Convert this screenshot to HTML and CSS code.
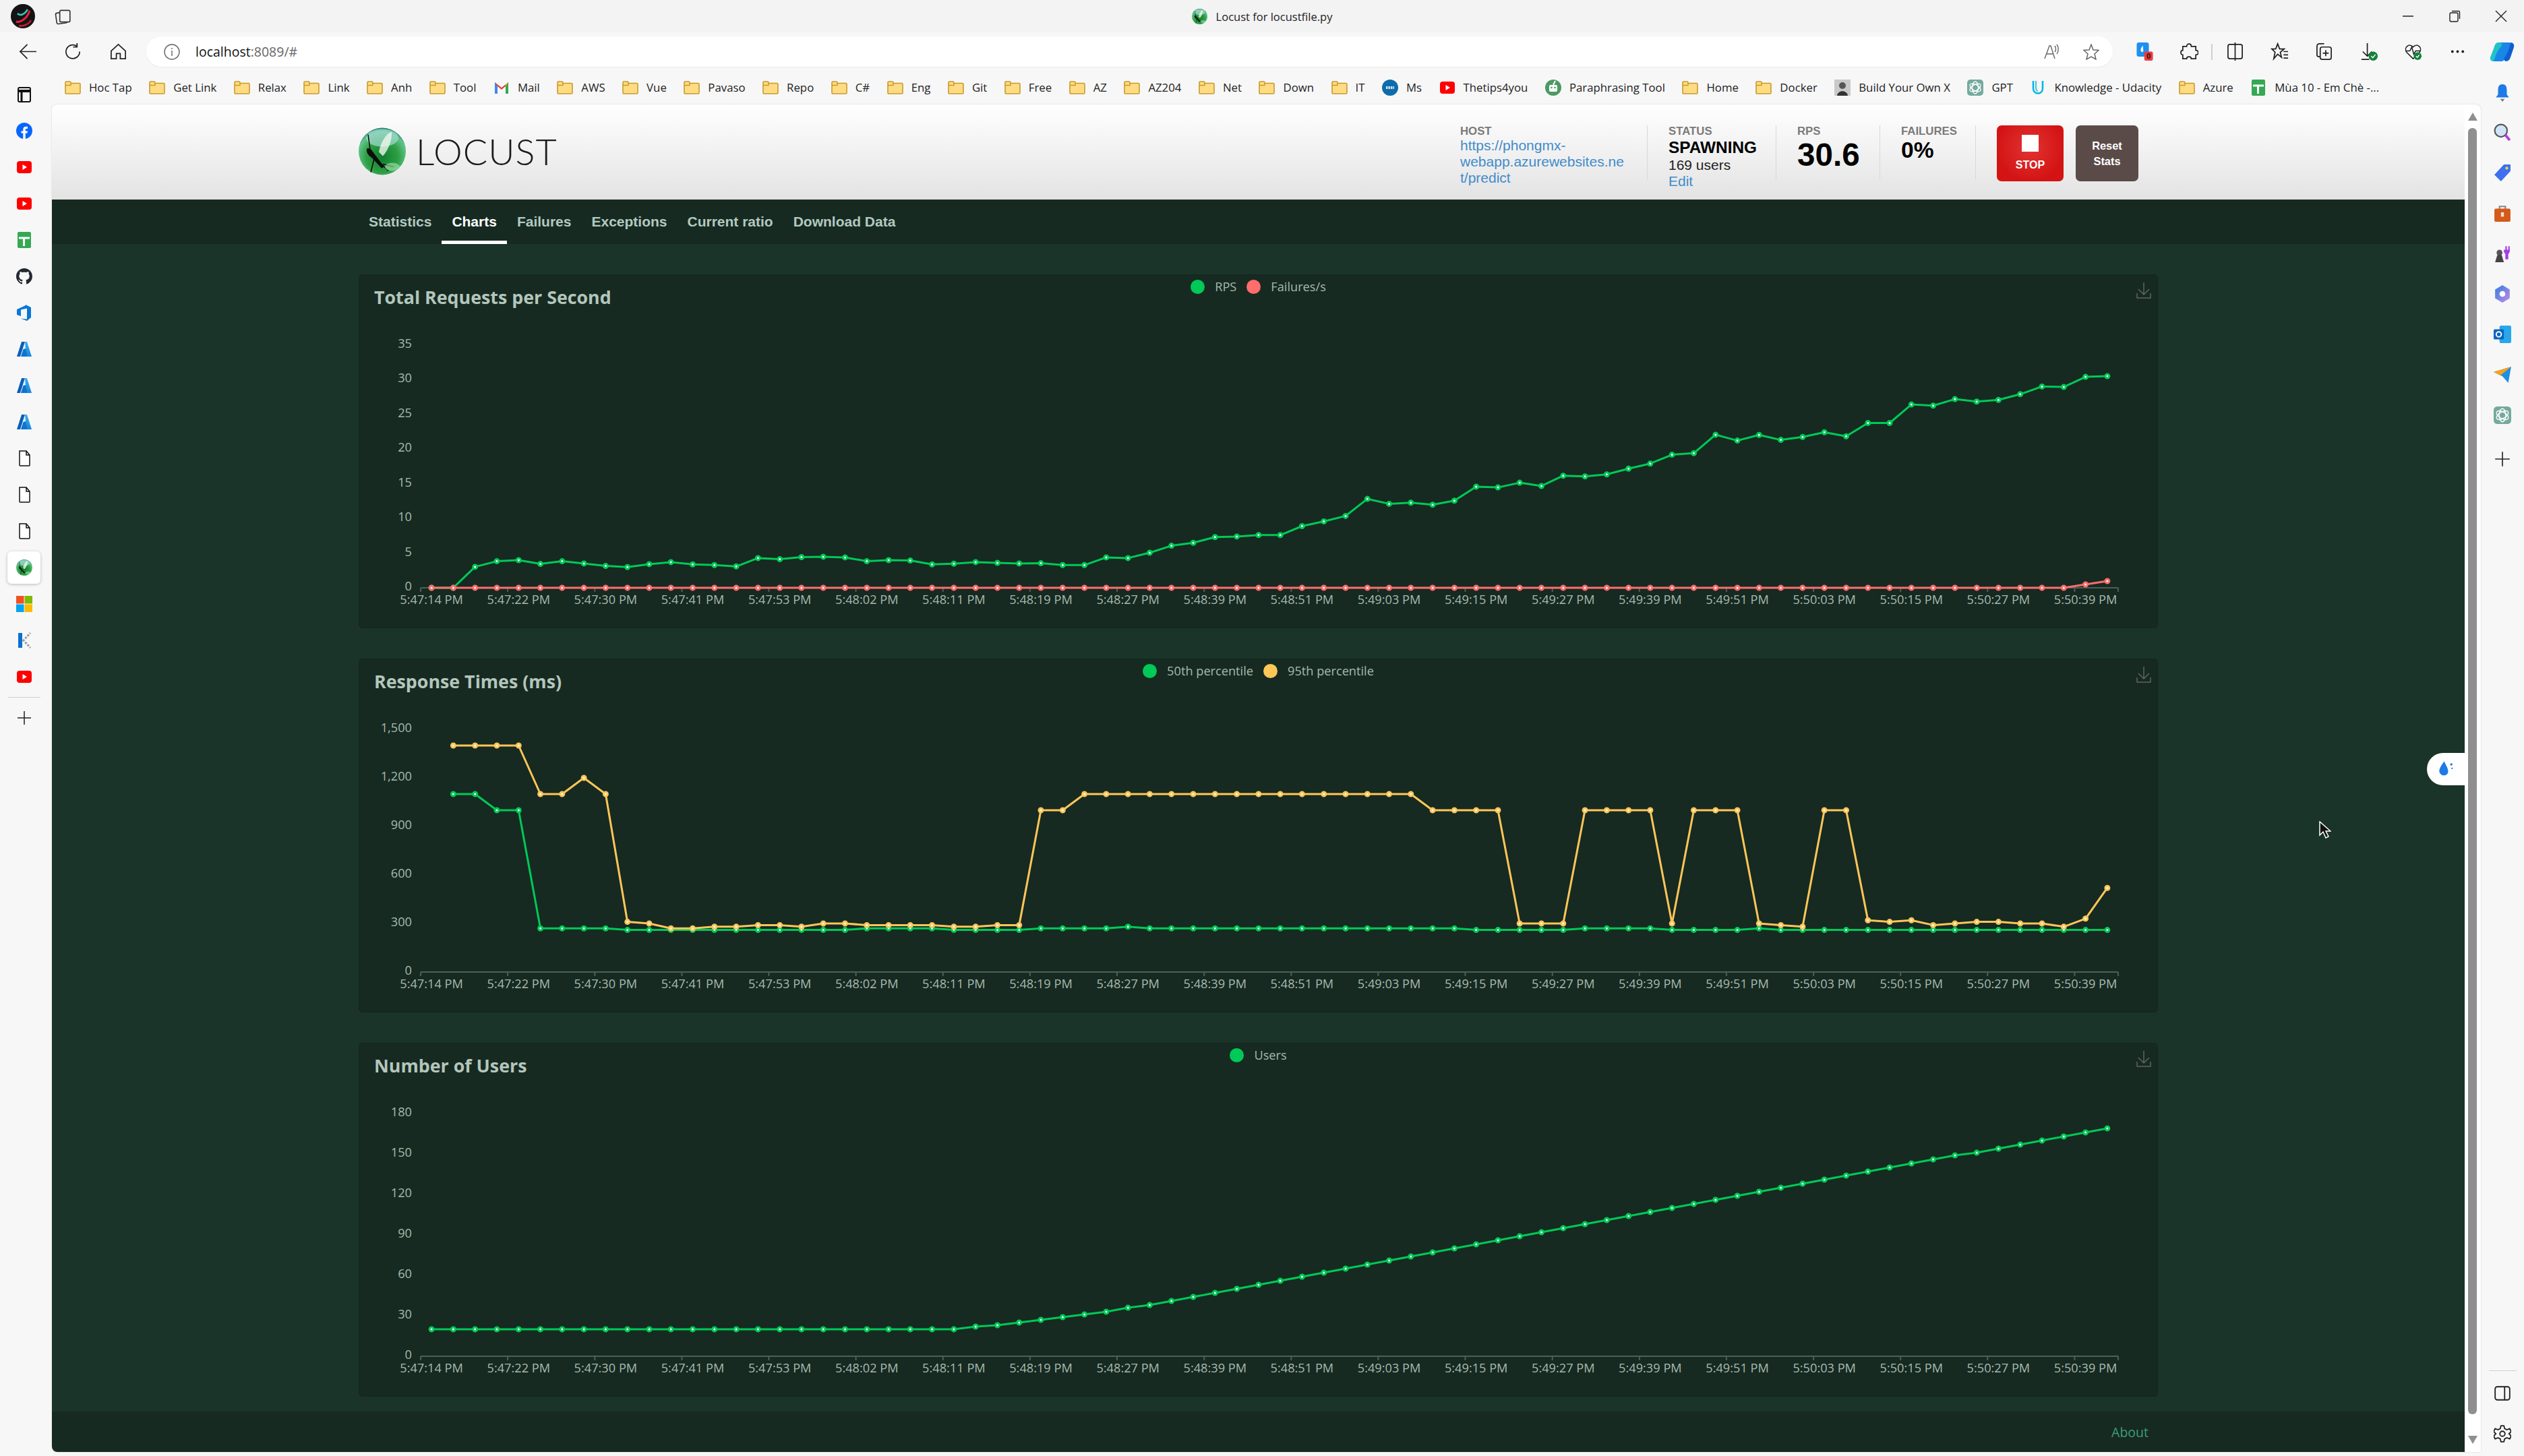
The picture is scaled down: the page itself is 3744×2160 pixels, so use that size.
FILE: index.html
```html
<!DOCTYPE html>
<html lang="en">
<head>
    <meta charset="UTF-8">
    <meta name="viewport" content="width=device-width, initial-scale=1.0">
    <title>Locust for locustfile.py</title>
    <link rel="stylesheet" href="styles.css">
</head>
<body>
    <!-- Shared icons -->
    <svg class="icon-defs" width="0" height="0">
        <defs>
            <radialGradient id="ball" cx="50%" cy="62%" r="62%">
                <stop offset="0" stop-color="#0f7d2e"/>
                <stop offset="0.55" stop-color="#2f9f45"/>
                <stop offset="0.85" stop-color="#62c48c"/>
                <stop offset="1" stop-color="#1f7d6a"/>
            </radialGradient>
            <linearGradient id="azure-a" x1="0" y1="0" x2="0" y2="1">
                <stop offset="0" stop-color="#35b0f0"/>
                <stop offset="1" stop-color="#1c84dc"/>
            </linearGradient>
            <linearGradient id="m365" x1="0" y1="0" x2="1" y2="1">
                <stop offset="0" stop-color="#2f7fe0"/>
                <stop offset="1" stop-color="#c58be8"/>
            </linearGradient>
        </defs>
        <symbol id="i-locust" viewBox="0 0 70 70">
            <circle cx="35" cy="35" r="35" fill="url(#ball)"/>
            <ellipse cx="35" cy="15" rx="24" ry="13" fill="#9ed8cc" opacity="0.75"/>
            <path d="M30 36C33 20 42 8 49 6C50 16 45 32 36 42Z" fill="#eef8ee" opacity="0.8"/>
            <path d="M12 31C16 29 20 33 22 37L38 58L34 60L19 44C14 41 11 36 12 31Z" fill="#0c0f0c"/>
            <path d="M14 10L17 32M24 42L18 66M32 52L44 64M36 54L52 58" stroke="#0c0f0c" stroke-width="1.6" fill="none"/>
            <ellipse cx="50" cy="58" rx="11" ry="6" fill="#a6e6b0" opacity="0.6"/>
        </symbol>
        <symbol id="i-folder" viewBox="0 0 24 20">
            <path d="M1 4V2.5C1 1.6 1.6 1 2.5 1H7.5C8.4 1 9 1.6 9 2.5V3.5H21.5C22.4 3.5 23 4.1 23 5V17.5C23 18.4 22.4 19 21.5 19H2.5C1.6 19 1 18.4 1 17.5Z" fill="#ffdc83" stroke="#c89b2c" stroke-width="1.6"/>
            <path d="M1 6.5H9V3.5" fill="none" stroke="#c89b2c" stroke-width="1.4"/>
        </symbol>
        <symbol id="i-youtube" viewBox="0 0 24 24">
            <rect x="1" y="3" width="22" height="18" rx="4" fill="#ff0000"/>
            <path d="M9.5 8L16 12L9.5 16Z" fill="#fff"/>
        </symbol>
        <symbol id="i-sheet" viewBox="0 0 24 24">
            <rect x="2" y="0" width="20" height="24" rx="2" fill="#34a853"/>
            <path d="M4 9H20M11.5 9V21" stroke="#fff" stroke-width="3"/>
        </symbol>
        <symbol id="i-azure" viewBox="0 0 24 24">
            <path d="M8 1H13L6 23H1Z" fill="#0a5fb8"/>
            <path d="M13 1H16L23 23H15Z" fill="url(#azure-a)"/>
            <path d="M10.5 12L14 11L16.5 23H7Z" fill="#0d74cf"/>
        </symbol>
        <symbol id="i-file" viewBox="0 0 24 24">
            <path d="M5 1H15L20 7V22C20 22.6 19.6 23 19 23H6C5.4 23 5 22.6 5 22ZM15 1V7H20" fill="#fff" stroke="#111" stroke-width="1.5"/>
        </symbol>
        <symbol id="i-gpt" viewBox="0 0 24 24">
            <rect width="24" height="24" rx="5" fill="#74aa9c"/>
            <g fill="none" stroke="#fff" stroke-width="1.3">
                <ellipse cx="12" cy="12" rx="4.5" ry="9"/>
                <ellipse cx="12" cy="12" rx="4.5" ry="9" transform="rotate(60 12 12)"/>
                <ellipse cx="12" cy="12" rx="4.5" ry="9" transform="rotate(120 12 12)"/>
            </g>
        </symbol>
        <symbol id="i-plus" viewBox="0 0 24 24">
            <path d="M12 2V22M2 12H22" stroke="#222" stroke-width="1.5"/>
        </symbol>
        <symbol id="i-download" viewBox="0 0 22 24">
            <path d="M11 0V17M3 10L11 18L19 10M1 16V23H21V16" fill="none" stroke="#5c6660" stroke-width="1.5"/>
        </symbol>
    </svg>

    <div class="browser">
        <header class="titlebar">
            <div class="titlebar-left">
                <svg class="avatar" viewBox="0 0 36 36">
                    <circle cx="18" cy="18" r="18" fill="#141417"/>
                    <path d="M8 26C14 28 24 22 28 10" stroke="#e5213a" stroke-width="3" fill="none"/>
                    <path d="M10 14C14 18 20 16 25 8" stroke="#35c7b4" stroke-width="2.5" fill="none"/>
                    <path d="M12 32C18 33 26 31 30 24" stroke="#c81e2c" stroke-width="2.5" fill="none"/>
                </svg>
                <svg class="tab-icon" viewBox="0 0 24 24" fill="none" stroke="#333" stroke-width="1.5">
                    <rect x="3" y="7" width="14" height="15" rx="2" transform="rotate(-8 10 14)"/>
                    <rect x="8" y="4" width="14" height="16" rx="2" fill="#f3f3f3"/>
                </svg>
            </div>
            <div class="tab-title">
                <svg class="favicon"><use href="#i-locust"/></svg>
                <span>Locust for locustfile.py</span>
            </div>
            <div class="window-controls">
                <span class="win-btn"><svg viewBox="0 0 18 18"><path d="M1 9H17" stroke="#222" stroke-width="1.5"/></svg></span>
                <span class="win-btn"><svg viewBox="0 0 18 18" fill="none" stroke="#222" stroke-width="1.4"><rect x="2" y="4" width="12" height="13" rx="2"/><path d="M5 1.5H15C16 1.5 16.5 2 16.5 3V13"/></svg></span>
                <span class="win-btn"><svg viewBox="0 0 18 18"><path d="M1 1L17 17M17 1L1 17" stroke="#222" stroke-width="1.4"/></svg></span>
            </div>
        </header>

        <div class="toolbar">
            <button class="tool-btn"><svg viewBox="0 0 28 28" fill="none" stroke="#222" stroke-width="1.8"><path d="M27 14H2M13 3L2 14L13 25"/></svg></button>
            <button class="tool-btn"><svg viewBox="0 0 28 28" fill="none" stroke="#222" stroke-width="1.8"><path d="M24 14A10.5 10.5 0 1 1 20 6M20 1V7H14"/></svg></button>
            <button class="tool-btn"><svg viewBox="0 0 28 28" fill="none" stroke="#222" stroke-width="1.8"><path d="M3 13L14 3L25 13V25H17V17H11V25H3Z"/></svg></button>
            <div class="address">
                <svg class="address-info" viewBox="0 0 24 24" fill="none" stroke="#666" stroke-width="1.4"><circle cx="12" cy="12" r="11"/><path d="M12 10V18M12 6V8"/></svg>
                <span class="address-url">localhost<span class="address-port">:8089/#</span></span>
                <svg class="address-icon" viewBox="0 0 24 24" fill="none" stroke="#666" stroke-width="1.4"><path d="M2 22L9 3H11L17 22M5 15H14M17 3C19 6 19 10 17 12M20 1C23 5 23 11 20 15"/></svg>
                <svg class="address-icon" viewBox="0 0 24 24" fill="none" stroke="#666" stroke-width="1.5"><path d="M12 1L15 9L23 9.5L17 15L19 23L12 19L5 23L7 15L1 9.5L9 9Z"/></svg>
            </div>
            <button class="tool-btn wide">
                <svg viewBox="0 0 32 36"><rect x="0" y="0" width="24" height="28" rx="4" fill="#1e90f0"/><path d="M12 6C8 12 7 15 9 18C11 20 14 18 13 15Z" fill="#fff"/><rect x="15" y="18" width="17" height="18" rx="3" fill="#ef3b3b"/><text class="badge-text" x="23.5" y="32">0</text></svg>
            </button>
            <button class="tool-btn wide"><svg viewBox="0 0 28 28" fill="none" stroke="#222" stroke-width="1.8"><path d="M10 6C10 1 17 1 17 6H24V12C29 12 29 19 24 19V25H17C17 21 10 21 10 25H4V19C0 19 0 12 4 12V6Z"/></svg></button>
            <span class="tool-sep"></span>
            <button class="tool-btn wide"><svg viewBox="0 0 28 28" fill="none" stroke="#222" stroke-width="1.8"><rect x="3" y="3" width="22" height="22" rx="3"/><path d="M14 0V28"/></svg></button>
            <button class="tool-btn wide"><svg viewBox="0 0 28 28" fill="none" stroke="#222" stroke-width="1.8"><path d="M11 2L14 10H21L15 15L17 23L11 18L5 25L7 15L2 10H8ZM20 14H27M20 19H27M20 24H27"/></svg></button>
            <button class="tool-btn wide"><svg viewBox="0 0 28 28" fill="none" stroke="#222" stroke-width="1.8"><path d="M8 22H6C4 22 3 21 3 19V6C3 3 5 2 7 2H14"/><rect x="8" y="7" width="17" height="19" rx="3"/><path d="M16.5 12V21M12 16.5H21"/></svg></button>
            <button class="tool-btn wide"><svg viewBox="0 0 28 28" fill="none"><path d="M12 1V21M5 14L12 21L19 14M3 26H15" stroke="#222" stroke-width="1.8"/><circle cx="21" cy="21" r="7" fill="#12833c"/><path d="M18 21L20.5 23.5L24.5 18.5" stroke="#fff" stroke-width="1.5"/></svg></button>
            <button class="tool-btn wide"><svg viewBox="0 0 28 28" fill="none"><path d="M14 25L4 15C-1 8 8 0 14 7C20 0 29 8 24 15ZM2 13H9L12 7L15 18L18 13H26" stroke="#222" stroke-width="1.6"/><circle cx="21" cy="21" r="6" fill="#12833c"/><path d="M18.5 21L20.5 23L23.5 19" stroke="#fff" stroke-width="1.4"/></svg></button>
            <button class="tool-btn wide"><svg viewBox="0 0 28 28" fill="#222"><circle cx="6" cy="14" r="2"/><circle cx="14" cy="14" r="2"/><circle cx="22" cy="14" r="2"/></svg></button>
            <button class="tool-btn wide copilot"><svg viewBox="0 0 38 32"><path d="M14 2H30C34 2 32 6 30 12L24 26C22 30 20 30 16 30H8C4 30 5 26 7 22Z" fill="#1a87e8"/><path d="M14 2C10 2 9 5 7 11L2 24C1 28 4 30 7 30C9 24 12 14 18 8C20 6 20 2 14 2Z" fill="#22c3c8"/><path d="M24 30C30 30 31 27 33 21L37 9C38 5 36 2 32 2C31 8 27 20 22 26Z" fill="#0f5fd0"/></svg></button>
        </div>

        <aside class="sidebar-left">
            <div class="side-slot"><svg class="side-icon" viewBox="0 0 24 24" fill="none" stroke="#111" stroke-width="2"><rect x="3" y="2" width="18" height="21" rx="2"/><path d="M3 7H21" stroke-width="4"/><path d="M8 7V23" stroke-width="3"/></svg></div>
            <div class="side-slot"><svg class="side-icon" viewBox="0 0 24 24"><circle cx="12" cy="12" r="12" fill="#0866ff"/><path d="M16.5 15.5L17 12.5H13.8V10.5C13.8 9.5 14.3 9 15.3 9H17V6C16.3 5.9 15.4 5.8 14.6 5.8C12 5.8 10.3 7.3 10.3 10.1V12.5H7.5V15.5H10.3V24H13.8V15.5Z" fill="#fff"/></svg></div>
            <div class="side-slot"><svg class="side-icon"><use href="#i-youtube"/></svg></div>
            <div class="side-slot"><svg class="side-icon"><use href="#i-youtube"/></svg></div>
            <div class="side-slot"><svg class="side-icon"><use href="#i-sheet"/></svg></div>
            <div class="side-slot"><svg class="side-icon" viewBox="0 0 16 16"><path fill="#24292f" d="M8 0C3.58 0 0 3.58 0 8c0 3.54 2.29 6.53 5.47 7.59.4.07.55-.17.55-.38 0-.19-.01-.82-.01-1.49-2.01.37-2.53-.49-2.69-.94-.09-.23-.48-.94-.82-1.13-.28-.15-.68-.52-.01-.53.63-.01 1.08.58 1.23.82.72 1.21 1.87.87 2.33.66.07-.52.28-.87.51-1.07-1.78-.2-3.64-.89-3.64-3.95 0-.87.31-1.59.82-2.15-.08-.2-.36-1.02.08-2.12 0 0 .67-.21 2.2.82.64-.18 1.32-.27 2-.27.68 0 1.36.09 2 .27 1.53-1.04 2.2-.82 2.2-.82.44 1.1.16 1.92.08 2.12.51.56.82 1.27.82 2.15 0 3.07-1.87 3.75-3.65 3.95.29.25.54.73.54 1.48 0 1.07-.01 1.93-.01 2.2 0 .21.15.46.55.38A8.013 8.013 0 0016 8c0-4.42-3.58-8-8-8z"/></svg></div>
            <div class="side-slot"><svg class="side-icon" viewBox="0 0 24 24"><path d="M22 4V19L16 24L7 20.5L16 21.5V5.5L7 7.5V17L1 15V7L14 1V0Z" fill="#0a78d4"/></svg></div>
            <div class="side-slot"><svg class="side-icon"><use href="#i-azure"/></svg></div>
            <div class="side-slot"><svg class="side-icon"><use href="#i-azure"/></svg></div>
            <div class="side-slot"><svg class="side-icon"><use href="#i-azure"/></svg></div>
            <div class="side-slot"><svg class="side-icon"><use href="#i-file"/></svg></div>
            <div class="side-slot"><svg class="side-icon"><use href="#i-file"/></svg></div>
            <div class="side-slot"><svg class="side-icon"><use href="#i-file"/></svg></div>
            <div class="side-slot active"><svg class="side-icon"><use href="#i-locust"/></svg></div>
            <div class="side-slot"><svg class="side-icon" viewBox="0 0 24 24"><rect width="11.5" height="11.5" fill="#f25022"/><rect x="12.5" width="11.5" height="11.5" fill="#7fba00"/><rect y="12.5" width="11.5" height="11.5" fill="#00a4ef"/><rect x="12.5" y="12.5" width="11.5" height="11.5" fill="#ffb900"/></svg></div>
            <div class="side-slot"><svg class="side-icon" viewBox="0 0 24 24"><path d="M3 1H9V23H3Z" fill="#0a6fd0"/><path d="M10 13L21 1M10 11L21 23" stroke="#9a9a9a" stroke-width="3" stroke-dasharray="3 2"/></svg></div>
            <div class="side-slot"><svg class="side-icon"><use href="#i-youtube"/></svg></div>
            <div class="side-divider"></div>
            <div class="side-slot add"><svg class="side-icon"><use href="#i-plus"/></svg></div>
        </aside>

        <nav class="bookmarks">
            <a class="bookmark"><svg class="bm-folder"><use href="#i-folder"/></svg>Hoc Tap</a>
            <a class="bookmark"><svg class="bm-folder"><use href="#i-folder"/></svg>Get Link</a>
            <a class="bookmark"><svg class="bm-folder"><use href="#i-folder"/></svg>Relax</a>
            <a class="bookmark"><svg class="bm-folder"><use href="#i-folder"/></svg>Link</a>
            <a class="bookmark"><svg class="bm-folder"><use href="#i-folder"/></svg>Anh</a>
            <a class="bookmark"><svg class="bm-folder"><use href="#i-folder"/></svg>Tool</a>
            <a class="bookmark"><svg class="bm-icon" viewBox="0 0 24 24"><path d="M2 4L12 12L22 4V21H18V10L12 15L6 10V21H2Z" fill="#ea4335"/><path d="M2 4V21H6V10Z" fill="#4285f4"/><path d="M22 4V21H18V10Z" fill="#34a853"/><path d="M22 4L18 10V7Z" fill="#fbbc04"/></svg>Mail</a>
            <a class="bookmark"><svg class="bm-folder"><use href="#i-folder"/></svg>AWS</a>
            <a class="bookmark"><svg class="bm-folder"><use href="#i-folder"/></svg>Vue</a>
            <a class="bookmark"><svg class="bm-folder"><use href="#i-folder"/></svg>Pavaso</a>
            <a class="bookmark"><svg class="bm-folder"><use href="#i-folder"/></svg>Repo</a>
            <a class="bookmark"><svg class="bm-folder"><use href="#i-folder"/></svg>C#</a>
            <a class="bookmark"><svg class="bm-folder"><use href="#i-folder"/></svg>Eng</a>
            <a class="bookmark"><svg class="bm-folder"><use href="#i-folder"/></svg>Git</a>
            <a class="bookmark"><svg class="bm-folder"><use href="#i-folder"/></svg>Free</a>
            <a class="bookmark"><svg class="bm-folder"><use href="#i-folder"/></svg>AZ</a>
            <a class="bookmark"><svg class="bm-folder"><use href="#i-folder"/></svg>AZ204</a>
            <a class="bookmark"><svg class="bm-folder"><use href="#i-folder"/></svg>Net</a>
            <a class="bookmark"><svg class="bm-folder"><use href="#i-folder"/></svg>Down</a>
            <a class="bookmark"><svg class="bm-folder"><use href="#i-folder"/></svg>IT</a>
            <a class="bookmark"><svg class="bm-icon" viewBox="0 0 24 24"><circle cx="12" cy="12" r="12" fill="#0f6cab"/><path d="M6 12H18" stroke="#cfe6f5" stroke-width="4" stroke-dasharray="2.5 1"/></svg>Ms</a>
            <a class="bookmark"><svg class="bm-icon"><use href="#i-youtube"/></svg>Thetips4you</a>
            <a class="bookmark"><svg class="bm-icon" viewBox="0 0 24 24"><circle cx="12" cy="12" r="12" fill="#4d9a62"/><rect x="6" y="8" width="12" height="10" rx="2" fill="#fff"/><path d="M12 8L15 2" stroke="#fff" stroke-width="2"/><circle cx="9.5" cy="12" r="1.3" fill="#4d9a62"/><circle cx="14.5" cy="12" r="1.3" fill="#4d9a62"/></svg>Paraphrasing Tool</a>
            <a class="bookmark"><svg class="bm-folder"><use href="#i-folder"/></svg>Home</a>
            <a class="bookmark"><svg class="bm-folder"><use href="#i-folder"/></svg>Docker</a>
            <a class="bookmark"><svg class="bm-icon" viewBox="0 0 24 24"><rect width="24" height="24" fill="#c9c9c9"/><circle cx="12" cy="9" r="5" fill="#555"/><path d="M4 24C5 15 19 15 20 24Z" fill="#333"/></svg>Build Your Own X</a>
            <a class="bookmark"><svg class="bm-icon"><use href="#i-gpt"/></svg>GPT</a>
            <a class="bookmark"><svg class="bm-icon" viewBox="0 0 24 24" fill="none" stroke="#02b3e4" stroke-width="2.5"><path d="M5 2V13C5 23 19 23 19 13V2"/><path d="M9 2V13C9 16 11 17 12 17" stroke-width="1.5"/></svg>Knowledge - Udacity</a>
            <a class="bookmark"><svg class="bm-folder"><use href="#i-folder"/></svg>Azure</a>
            <a class="bookmark"><svg class="bm-icon"><use href="#i-sheet"/></svg>Mùa 10 - Em Chè -...</a>
        </nav>

        <aside class="sidebar-right">
            <div class="side-slot first"><svg class="side-icon" viewBox="0 0 24 24"><path d="M12 0C7 0 6 4 6 8V14L3 18H21L18 14V8C18 4 17 0 12 0Z" fill="#1e7ae6"/><path d="M9 20H15L12 24Z" fill="#777"/></svg></div>
            <div class="side-slot"><svg class="side-icon" viewBox="0 0 24 24" fill="none"><circle cx="10" cy="10" r="8.5" fill="#cfe4f7" stroke="#555" stroke-width="2"/><path d="M16 16L22 23" stroke="#b23be0" stroke-width="3.5"/></svg></div>
            <div class="side-slot"><svg class="side-icon" viewBox="0 0 24 24"><path d="M14 1H23V10L10 24L1 15Z" fill="#3d6ff0"/><circle cx="18" cy="6" r="2" fill="#ffd040"/></svg></div>
            <div class="side-slot"><svg class="side-icon" viewBox="0 0 24 24"><path d="M8 7V3H16V7" fill="none" stroke="#888" stroke-width="2"/><rect x="1" y="6" width="22" height="18" rx="2" fill="#d4591a"/><rect x="10" y="11" width="4" height="6" fill="#f4e2c8"/></svg></div>
            <div class="side-slot"><svg class="side-icon" viewBox="0 0 24 24"><circle cx="8" cy="11" r="4" fill="#555"/><path d="M2 24L5 14H11L14 24Z" fill="#444"/><path d="M14 2V7H16V2H18V7H20V2H22V10L20 13V20H16V13L14 10Z" fill="#a43be8"/></svg></div>
            <div class="side-slot"><svg class="side-icon" viewBox="0 0 24 24"><path d="M12 0L22 6V18L12 24L2 18V6Z" fill="url(#m365)"/><circle cx="12" cy="12" r="4" fill="#fff"/></svg></div>
            <div class="side-slot"><svg class="side-icon" viewBox="0 0 24 24"><rect x="8" y="0" width="16" height="24" rx="2" fill="#28a8ea"/><rect x="0" y="5" width="14" height="14" rx="1.5" fill="#0a66c2"/><circle cx="7" cy="12" r="3.5" fill="none" stroke="#fff" stroke-width="1.8"/></svg></div>
            <div class="side-slot"><svg class="side-icon" viewBox="0 0 24 24"><path d="M0 8L24 1L20 23L12 14Z" fill="#1f8fe6"/><path d="M0 8L24 1L9 13Z" fill="#f7a21a"/></svg></div>
            <div class="side-slot"><svg class="side-icon gpt"><use href="#i-gpt"/></svg></div>
            <div class="side-slot add"><svg class="side-icon"><use href="#i-plus"/></svg></div>
            <div class="side-bottom">
                <div class="side-divider"></div>
                <div class="side-slot"><svg class="side-icon" viewBox="0 0 24 24" fill="none" stroke="#222" stroke-width="1.7"><rect x="2" y="3" width="20" height="18" rx="3"/><path d="M15 3V21"/></svg></div>
                <div class="side-slot"><svg class="side-icon" viewBox="0 0 24 24" fill="none" stroke="#222" stroke-width="1.7"><circle cx="12" cy="12" r="3.5"/><path d="M10 1H14L15 5L18 6.5L22 5L24 9L21 12L24 15L22 19L18 17.5L15 19L14 23H10L9 19L6 17.5L2 19L0 15L3 12L0 9L2 5L6 6.5L9 5Z"/></svg></div>
            </div>
        </aside>

        <main class="page">
            <div class="content">
                <header class="app-header">
                    <div class="container header-row">
                        <a class="logo">
                            <svg class="logo-ball"><use href="#i-locust"/></svg>
                            <span class="logo-text">LOCUST</span>
                        </a>
                        <div class="stats">
                            <div class="stat stat-host">
                                <div class="stat-label">HOST</div>
                                <a class="stat-link">https://phongmx-webapp.azurewebsites.net/predict</a>
                            </div>
                            <div class="stat stat-status">
                                <div class="stat-label">STATUS</div>
                                <div class="stat-state">SPAWNING</div>
                                <div class="stat-users">169 users</div>
                                <a class="stat-link">Edit</a>
                            </div>
                            <div class="stat stat-rps">
                                <div class="stat-label">RPS</div>
                                <div class="stat-big">30.6</div>
                            </div>
                            <div class="stat stat-failures">
                                <div class="stat-label">FAILURES</div>
                                <div class="stat-mid">0%</div>
                            </div>
                            <button class="btn-stop"><span class="stop-square"></span>STOP</button>
                            <button class="btn-reset">Reset<br>Stats</button>
                        </div>
                    </div>
                </header>

                <nav class="tabs">
                    <div class="container tabs-row">
                        <a class="tab">Statistics</a>
                        <a class="tab active">Charts</a>
                        <a class="tab">Failures</a>
                        <a class="tab">Exceptions</a>
                        <a class="tab">Current ratio</a>
                        <a class="tab">Download Data</a>
                    </div>
                </nav>

                <section class="charts">
                    <div class="container chart-list">
                        <article class="chart-card">
                            <div class="chart-head">
                                <h2 class="chart-title">Total Requests per Second</h2>
                                <ul class="legend">
                                    <li class="legend-item"><span class="dot dot-green"></span>RPS</li>
                                    <li class="legend-item"><span class="dot dot-red"></span>Failures/s</li>
                                </ul>
                                <svg class="chart-save"><use href="#i-download"/></svg>
                            </div>
                            <svg class="chart" id="chart-rps" width="2667" height="454"></svg>
                        </article>
                        <article class="chart-card">
                            <div class="chart-head">
                                <h2 class="chart-title">Response Times (ms)</h2>
                                <ul class="legend">
                                    <li class="legend-item"><span class="dot dot-green"></span>50th percentile</li>
                                    <li class="legend-item"><span class="dot dot-yellow"></span>95th percentile</li>
                                </ul>
                                <svg class="chart-save"><use href="#i-download"/></svg>
                            </div>
                            <svg class="chart" id="chart-times" width="2667" height="454"></svg>
                        </article>
                        <article class="chart-card">
                            <div class="chart-head">
                                <h2 class="chart-title">Number of Users</h2>
                                <ul class="legend">
                                    <li class="legend-item"><span class="dot dot-green"></span>Users</li>
                                </ul>
                                <svg class="chart-save"><use href="#i-download"/></svg>
                            </div>
                            <svg class="chart" id="chart-users" width="2667" height="454"></svg>
                        </article>
                    </div>
                </section>

                <footer class="app-footer">
                    <div class="container footer-row"><a class="about">About</a></div>
                </footer>
            </div>
            <div class="scrollbar">
                <span class="scroll-up"></span>
                <span class="scroll-thumb"></span>
                <span class="scroll-down"></span>
            </div>
        </main>

        <!-- Floating bits that lie over the page -->
        <div class="drop-widget">
            <svg viewBox="0 0 24 24"><path d="M10 2C5 9 3 13 4 16C6 22 15 21 15 15C15 11 12 7 10 2Z" fill="#1e7ae6"/><circle cx="19" cy="6" r="1.5" fill="#1e7ae6"/><circle cx="20" cy="11" r="1" fill="#1e7ae6"/></svg>
        </div>
        <svg class="cursor" viewBox="0 0 18 26"><path d="M1 1V21L6 16L10 25L14 23L10 15H17Z" fill="#111" stroke="#fff" stroke-width="1.5"/></svg>
    </div>

    <script src="charts.js"></script>
</body>
</html>
```

FILE: styles.css
```css
/* Global settings */
:root {
    --color-chrome: #f7f7f7;
    --color-title: #f3f3f3;
    --color-dark: #162a21;
    --color-main: #1a3429;
    --color-chart-text: #a7b9af;
    --color-link: #428bca;
    --color-green: #00c957;
    --color-red: #ff6d6d;
    --color-yellow: #ffc658;
    --font-ui: "Open Sans", "Noto Sans", sans-serif;
    --font-app: "Liberation Sans", Arial, sans-serif;
}

* {
    box-sizing: border-box;
}

html, body {
    margin: 0;
    height: 100%;
    overflow: hidden;
}

body {
    background-color: var(--color-chrome);
    font-family: var(--font-ui);
    color: #222;
}

.icon-defs {
    position: absolute;
}

.browser {
    position: relative;
    display: grid;
    grid-template-columns: 77px 3603px 64px;
    grid-template-rows: 48px 62px 45px 1999px 6px;
    width: 3744px;
    height: 2160px;
}

/* Title bar */
.titlebar {
    grid-column: 1 / 4;
    display: grid;
    grid-template-columns: 1fr auto 1fr;
    align-items: center;
    background-color: var(--color-title);
}

.titlebar-left {
    display: flex;
    align-items: center;
    padding-left: 16px;
    gap: 28px;
}

.avatar {
    width: 36px;
    height: 36px;
}

.tab-icon {
    width: 26px;
    height: 26px;
}

.tab-title {
    display: flex;
    align-items: center;
    gap: 13px;
    font-size: 16.5px;
}

.favicon {
    width: 23px;
    height: 25px;
}

.window-controls {
    display: flex;
    justify-content: flex-end;
}

.win-btn {
    display: flex;
    justify-content: center;
    width: 69px;
}

.win-btn svg {
    width: 18px;
    height: 18px;
}

/* Address row */
.toolbar {
    grid-column: 1 / 4;
    display: flex;
    align-items: center;
    padding: 0 0 5px 8px;
    background-color: var(--color-chrome);
}

.tool-btn {
    display: flex;
    align-items: center;
    justify-content: center;
    flex: none;
    width: 67px;
    height: 44px;
    padding: 0;
    border: 0;
    background: none;
}

.tool-btn svg {
    width: 27px;
    height: 27px;
}

.tool-btn.wide {
    width: 66px;
}

.copilot svg {
    width: 38px;
    height: 32px;
}

.address {
    display: flex;
    align-items: center;
    flex: 1;
    height: 45px;
    margin: 0 14px 0 8px;
    padding: 0 20px 0 26px;
    background-color: #fff;
    border-radius: 23px;
    box-shadow: 0 1px 2px rgba(0, 0, 0, 0.06);
}

.address-info {
    width: 24px;
    height: 24px;
    margin-right: 23px;
}

.address-url {
    flex: 1;
    font-size: 19.5px;
    color: #111;
}

.address-port {
    color: #666;
}

.address-icon {
    width: 24px;
    height: 24px;
    margin-left: 35px;
}

.badge-text {
    font-family: var(--font-app);
    font-size: 15px;
    font-weight: bold;
    fill: #111;
    text-anchor: middle;
}

.tool-sep {
    flex: none;
    width: 2px;
    height: 24px;
    background-color: #cfcfcf;
}

/* Bookmarks row */
.bookmarks {
    grid-column: 2;
    grid-row: 3;
    display: flex;
    align-items: center;
    gap: 25.5px;
    padding: 0 0 6px 19px;
    font-size: 16.8px;
    white-space: nowrap;
}

.bookmark {
    display: flex;
    align-items: center;
    gap: 12px;
    color: #222;
}

.bm-folder {
    width: 24px;
    height: 20px;
}

.bm-icon {
    width: 24px;
    height: 24px;
}

/* Side bars */
.sidebar-left {
    grid-column: 1;
    grid-row: 3 / 6;
    padding: 3px 6px 0 0;
    background-color: var(--color-chrome);
}

.sidebar-right {
    grid-column: 3;
    grid-row: 3 / 6;
    display: flex;
    flex-direction: column;
    padding-bottom: 3px;
    background-color: var(--color-chrome);
}

.side-slot {
    display: flex;
    align-items: center;
    justify-content: center;
    height: 54px;
}

.sidebar-right .side-slot {
    height: 60px;
}

.sidebar-right .side-slot.first {
    height: 56px;
}

.sidebar-right .side-slot.add {
    margin-top: 5px;
}

.side-icon {
    width: 24px;
    height: 24px;
}

.sidebar-right .side-icon {
    width: 26px;
    height: 26px;
}

.side-slot.active {
    position: relative;
    margin: 3px 11px;
    height: 48px;
    background-color: #fff;
    border-radius: 6px;
    box-shadow: 0 1px 4px rgba(0, 0, 0, 0.25);
}

.side-divider {
    height: 1px;
    margin: 3px 11px 3px 12px;
    background-color: #d0d0d0;
}

.side-bottom {
    margin-top: auto;
}

/* Locust page */
.page {
    grid-column: 2;
    grid-row: 4;
    display: flex;
    overflow: hidden;
    background-color: #fff;
    border-radius: 8px 8px 0 8px;
    box-shadow: 0 0 2px rgba(0, 0, 0, 0.2);
}

.content {
    display: flex;
    flex-direction: column;
    width: 3579px;
}

.container {
    width: 2669px;
    margin: 0 auto;
}

.app-header {
    flex: none;
    height: 141px;
    background: linear-gradient(#fff, #e3e3e3);
}

.header-row {
    display: flex;
    justify-content: space-between;
    align-items: flex-start;
}

.logo {
    display: flex;
    align-items: center;
    gap: 15px;
    margin-top: 34px;
}

.logo-ball {
    width: 70px;
    height: 71px;
}

.logo-text {
    font-family: "Lato", var(--font-ui);
    font-size: 54px;
    font-weight: 300;
    line-height: 71px;
    letter-spacing: 1px;
    color: #1a1a1a;
}

.stats {
    display: flex;
    align-items: flex-start;
    padding: 31px 29px 0 0;
    font-family: var(--font-app);
}

.stat {
    height: 80px;
    margin-right: 31px;
    border-right: 1px solid #d8d8d8;
}

.stat-host {
    width: 278px;
}

.stat-status {
    width: 160px;
}

.stat-rps {
    width: 123px;
}

.stat-failures {
    width: 111px;
}

.stat-label {
    font-size: 16.8px;
    font-weight: bold;
    line-height: 18px;
    color: #7a7a7a;
}

.stat-link {
    display: block;
    width: 245px;
    font-size: 21px;
    line-height: 24px;
    color: var(--color-link);
    overflow-wrap: anywhere;
}

.stat-state {
    font-size: 24.4px;
    font-weight: bold;
    line-height: 29px;
    color: #000;
}

.stat-users {
    font-size: 21px;
    line-height: 24px;
    color: #222;
}

.stat-big {
    font-size: 47.6px;
    font-weight: bold;
    line-height: 52px;
    color: #000;
}

.stat-mid {
    font-size: 33.6px;
    font-weight: bold;
    line-height: 38px;
    color: #000;
}

.btn-stop, .btn-reset {
    flex: none;
    height: 83px;
    padding: 0;
    border: 0;
    border-radius: 7px;
    font-family: var(--font-app);
    font-weight: bold;
    color: #fff;
}

.btn-stop {
    display: flex;
    flex-direction: column;
    align-items: center;
    width: 99px;
    padding-top: 14px;
    font-size: 16px;
    background: radial-gradient(circle at 50% 40%, #e13434, #d41414 70%);
}

.stop-square {
    width: 25px;
    height: 25px;
    margin-bottom: 11px;
    background-color: #fff;
}

.btn-reset {
    width: 93px;
    margin-left: 18px;
    font-size: 16.4px;
    line-height: 23px;
    background-color: #5a4b49;
}

/* Tabs */
.tabs {
    flex: none;
    height: 66px;
    background-color: var(--color-dark);
}

.tabs-row {
    display: flex;
    height: 100%;
}

.tab {
    display: flex;
    align-items: center;
    padding: 0 15px;
    font-family: var(--font-app);
    font-size: 21px;
    font-weight: bold;
    color: #b3c9c0;
    border-bottom: 5px solid transparent;
    border-top: 5px solid transparent;
}

.tab.active {
    color: #fff;
    border-bottom-color: #fff;
}

/* Charts */
.charts {
    flex: 1;
    padding-top: 45px;
    background-color: var(--color-main);
}

.chart-list {
    display: flex;
    flex-direction: column;
    gap: 45px;
}

.chart-card {
    height: 525px;
    background-color: var(--color-dark);
    border: 1px solid #14261e;
    border-radius: 6px;
}

.chart-head {
    display: grid;
    grid-template-columns: 1fr auto 1fr;
    align-items: flex-start;
    height: 69px;
}

.chart-title {
    margin: 14px 0 0 22px;
    font-size: 26.8px;
    font-weight: 700;
    line-height: 38px;
    color: #b4c6bc;
}

.legend {
    display: flex;
    gap: 15px;
    margin: 5px 0 0;
    padding: 0;
    list-style: none;
}

.legend-item {
    display: flex;
    align-items: center;
    gap: 15px;
    font-size: 18.2px;
    line-height: 24px;
    color: var(--color-chart-text);
}

.dot {
    width: 21px;
    height: 21px;
    border-radius: 50%;
}

.dot-green {
    background-color: var(--color-green);
}

.dot-red {
    background-color: var(--color-red);
}

.dot-yellow {
    background-color: var(--color-yellow);
}

.chart-save {
    justify-self: end;
    width: 22px;
    height: 24px;
    margin: 11px 9px 0 0;
}

.chart {
    display: block;
}

.chart text {
    font-family: var(--font-ui);
    font-size: 18.2px;
    fill: var(--color-chart-text);
}

.axis-y {
    text-anchor: end;
}

.axis-x {
    text-anchor: middle;
}

.axis-line {
    stroke: #4f5e56;
    stroke-width: 2;
    fill: none;
}

.series {
    fill: none;
    stroke-width: 3;
    stroke-linejoin: round;
}

.series circle {
    fill: #fff;
}

.series-green {
    stroke: var(--color-green);
}

.series-red {
    stroke: var(--color-red);
}

.series-yellow {
    stroke: var(--color-yellow);
}

/* Footer */
.app-footer {
    flex: none;
    height: 60px;
    background-color: var(--color-dark);
}

.footer-row {
    display: flex;
    justify-content: flex-end;
    align-items: center;
    height: 100%;
    padding-right: 14px;
}

.about {
    font-size: 19.5px;
    color: #3f9d78;
}

/* Scrollbar */
.scrollbar {
    display: flex;
    flex-direction: column;
    align-items: center;
    width: 24px;
    padding: 12px 6px 12px 5px;
}

.scroll-up, .scroll-down {
    flex: none;
    width: 0;
    height: 0;
    border-left: 7px solid transparent;
    border-right: 7px solid transparent;
}

.scroll-up {
    border-bottom: 12px solid #8f8f8f;
}

.scroll-down {
    margin-top: 32px;
    border-top: 12px solid #8f8f8f;
}

.scroll-thumb {
    flex: 1;
    width: 13px;
    margin-top: 11px;
    background-color: #8f8f8f;
    border-radius: 6px;
}

/* Floating bits */
.drop-widget {
    position: absolute;
    left: 3600px;
    top: 1117px;
    display: flex;
    align-items: center;
    justify-content: center;
    width: 56px;
    height: 48px;
    background-color: #fff;
    border-radius: 24px 0 0 24px;
}

.drop-widget svg {
    width: 28px;
    height: 28px;
}

.cursor {
    position: absolute;
    left: 3440px;
    top: 1218px;
    width: 18px;
    height: 26px;
}
```

FILE: charts.js
```js
/* Category labels, one shown every 4 points */
var shownTimes = ['5:47:14 PM', '5:47:22 PM', '5:47:30 PM', '5:47:41 PM', '5:47:53 PM', '5:48:02 PM', '5:48:11 PM',
    '5:48:19 PM', '5:48:27 PM', '5:48:39 PM', '5:48:51 PM', '5:49:03 PM', '5:49:15 PM', '5:49:27 PM', '5:49:39 PM',
    '5:49:51 PM', '5:50:03 PM', '5:50:15 PM', '5:50:27 PM', '5:50:39 PM'];

var pointCount = 78;

/* Requests per second */
var rps = [0, 0, 3.02, 3.83, 3.99, 3.44, 3.83, 3.51, 3.15, 2.99, 3.41, 3.70, 3.38, 3.28, 3.08, 4.29, 4.12, 4.42, 4.48,
    4.38, 3.83, 3.99, 3.93, 3.38, 3.47, 3.70, 3.60, 3.51, 3.54, 3.28, 3.28, 4.38, 4.29, 5.06, 6.07, 6.49, 7.31, 7.40,
    7.60, 7.60, 8.90, 9.58, 10.36, 12.82, 12.11, 12.27, 11.98, 12.56, 14.58, 14.48, 15.16, 14.68, 16.17, 16.07, 16.36,
    17.18, 17.92, 19.19, 19.42, 22.08, 21.23, 22.05, 21.33, 21.75, 22.44, 21.85, 23.77, 23.77, 26.43, 26.27, 27.21,
    26.85, 27.11, 27.92, 29.03, 28.96, 30.42, 30.52];

var failures = [];
for (var f = 0; f < pointCount; f++) {
    failures.push(0);
}
failures[76] = 0.49;
failures[77] = 0.97;

/* Response times */
var p50 = [null, 1100, 1100, 1000, 1000, 270, 270, 270, 270, 260, 260, 260, 260, 260, 260, 260, 260, 260, 260, 260,
    270, 270, 270, 270, 260, 260, 260, 260, 270, 270, 270, 270, 280, 270, 270, 270, 270, 270, 270, 270, 270, 270, 270,
    270, 270, 270, 270, 270, 260, 260, 260, 260, 260, 270, 270, 270, 270, 260, 260, 260, 260, 270, 260, 260, 260, 260,
    260, 260, 260, 260, 260, 260, 260, 260, 260, 260, 260, 260];

var p95 = [null, 1400, 1400, 1400, 1400, 1100, 1100, 1200, 1100, 310, 300, 270, 270, 280, 280, 290, 290, 280, 300, 300,
    290, 290, 290, 290, 280, 280, 290, 290, 1000, 1000, 1100, 1100, 1100, 1100, 1100, 1100, 1100, 1100, 1100, 1100,
    1100, 1100, 1100, 1100, 1100, 1100, 1000, 1000, 1000, 1000, 300, 300, 300, 1000, 1000, 1000, 1000, 300, 1000, 1000,
    1000, 300, 290, 280, 1000, 1000, 320, 310, 320, 290, 300, 310, 310, 300, 300, 280, 330, 520];

/* Users */
var users = [];
for (var u = 0; u < 25; u++) {
    users.push(20);
}
users = users.concat([22, 23, 25, 27, 29, 31, 33, 36, 38, 41, 44, 47, 50, 53, 56, 59, 62, 65, 68, 71, 74, 77, 80, 83,
    86, 89, 92, 95, 98, 101, 104, 107, 110, 113, 116, 119, 122, 125, 128, 131, 134, 137, 140, 143, 146, 149, 151, 154,
    157, 160, 163, 166, 169]);

/* Plot area inside each svg */
var plotLeft = 91;
var plotRight = 2609;
var plotZero = 395;
var plotHeight = 360;

function pointX(index) {
    var band = (plotRight - plotLeft) / pointCount;
    return plotLeft + band * (index + 0.5);
}

function drawAxes(chart) {
    var html = '';
    var band = (plotRight - plotLeft) / pointCount;

    /* Y axis labels */
    for (var value = 0; value <= chart.max; value += chart.step) {
        var labelY = plotZero - value / chart.max * plotHeight + 4;
        html += '<text class="axis-y" x="78" y="' + labelY.toFixed(1) + '">' + value.toLocaleString('en-US') + '</text>';
    }

    /* X axis with ticks */
    html += '<path class="axis-line" d="M' + plotLeft + ' ' + plotZero + 'H' + plotRight + '"/>';
    for (var i = 0; i <= pointCount; i += 4) {
        var tickX = plotLeft + band * i;
        html += '<path class="axis-line" d="M' + tickX.toFixed(1) + ' ' + plotZero + 'v6"/>';
        if (i < pointCount) {
            html += '<text class="axis-x" x="' + pointX(i).toFixed(1) + '" y="419">' + shownTimes[i / 4] + '</text>';
        }
    }
    html += '<path class="axis-line" d="M' + plotRight + ' ' + plotZero + 'v6"/>';
    return html;
}

function drawSeries(chart, series) {
    var points = [];
    var dots = '';
    series.data.forEach(function(value, index) {
        if (value === null) {
            return;
        }
        var x = pointX(index).toFixed(1);
        var y = (plotZero - value / chart.max * plotHeight).toFixed(1);
        points.push(x + ',' + y);
        dots += '<circle cx="' + x + '" cy="' + y + '" r="3"/>';
    });
    return '<g class="series series-' + series.color + '"><polyline points="' + points.join(' ') + '"/>' + dots + '</g>';
}

var charts = [
    { id: 'chart-rps', max: 35, step: 5, series: [{ color: 'green', data: rps }, { color: 'red', data: failures }] },
    { id: 'chart-times', max: 1500, step: 300, series: [{ color: 'green', data: p50 }, { color: 'yellow', data: p95 }] },
    { id: 'chart-users', max: 180, step: 30, series: [{ color: 'green', data: users }] }
];

charts.forEach(function(chart) {
    var html = drawAxes(chart);
    chart.series.forEach(function(series) {
        html += drawSeries(chart, series);
    });
    document.getElementById(chart.id).innerHTML = html;
});
```
